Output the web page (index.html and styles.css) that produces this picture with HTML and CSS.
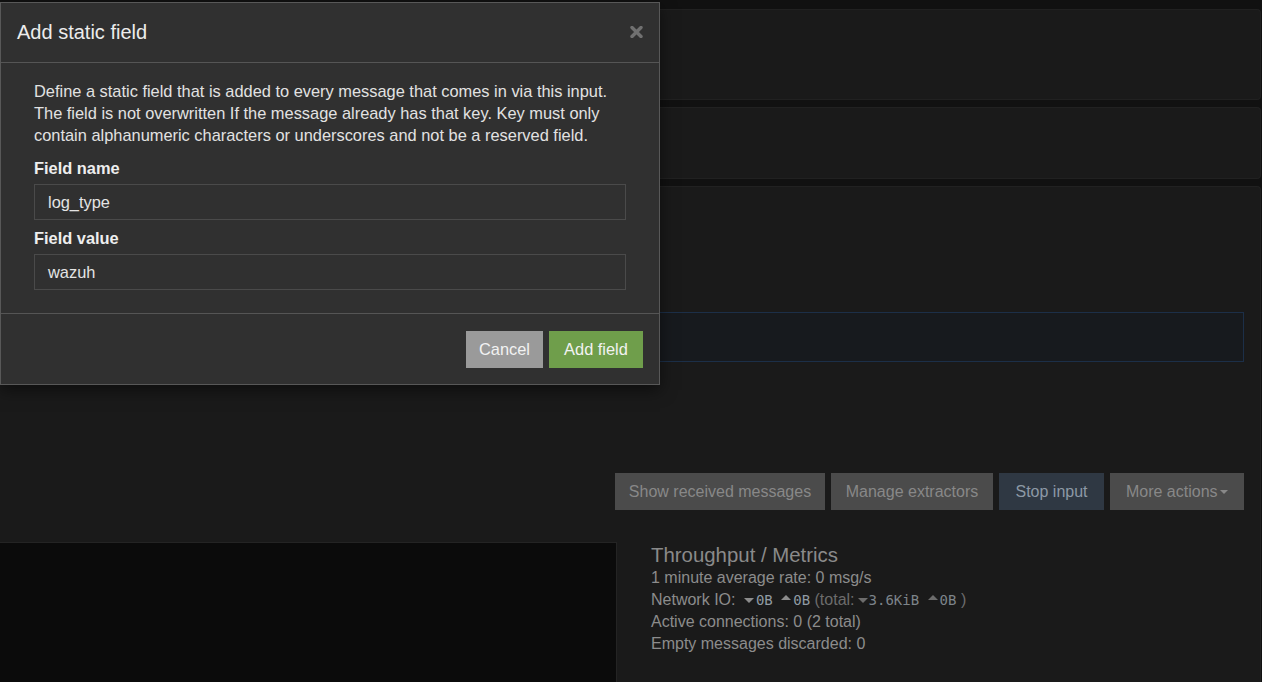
FILE: index.html
```html
<!DOCTYPE html>
<html lang="en">
<head>
<meta charset="utf-8">
<title>Add static field</title>
<link rel="stylesheet" href="styles.css">
</head>
<body>
<div class="page">
  <div class="panel panel-a"></div>
  <div class="panel panel-b"></div>
  <div class="panel panel-c">
    <div class="panel-c-top"></div>
    <div class="alert-box"></div>
    <div class="actions">
      <button class="btn btn-muted btn-show">Show received messages</button>
      <button class="btn btn-muted btn-manage">Manage extractors</button>
      <button class="btn btn-stop">Stop input</button>
      <button class="btn btn-muted btn-more">More actions <span class="caret"></span></button>
    </div>
    <div class="bottom-row">
      <div class="dark-box"></div>
      <div class="metrics">
        <h3 class="metrics-title">Throughput / Metrics</h3>
        <div class="metric">1 minute average rate: 0 msg/s</div>
        <div class="metric">Network IO: <span class="tri down"></span><span class="mono">0B</span> <span class="tri up"></span><span class="mono">0B</span> <span class="total">(total:<span class="tri down tight"></span><span class="mono">3.6KiB</span> <span class="tri up"></span><span class="mono">0B</span> )</span></div>
        <div class="metric">Active connections: 0 (2 total)</div>
        <div class="metric">Empty messages discarded: 0</div>
      </div>
    </div>
  </div>
</div>

<div class="modal">
  <div class="modal-header">
    <h2 class="modal-title">Add static field</h2>
    <svg class="close" width="13" height="12" viewBox="0 0 13 12" aria-label="Close">
      <path d="M2 1.5 L11 10.5 M11 1.5 L2 10.5" stroke="#707070" stroke-width="3.4" stroke-linecap="round" fill="none"/>
    </svg>
  </div>
  <div class="modal-body">
    <p class="help">Define a static field that is added to every message that comes in via this input. The field is not overwritten If the message already has that key. Key must only contain alphanumeric characters or underscores and not be a reserved field.</p>
    <label class="label">Field name</label>
    <div class="input">log_type</div>
    <label class="label label-second">Field value</label>
    <div class="input">wazuh</div>
  </div>
  <div class="modal-footer">
    <button class="mbtn mbtn-cancel">Cancel</button>
    <button class="mbtn mbtn-add">Add field</button>
  </div>
</div>
</body>
</html>
```
FILE: styles.css
```css
* { box-sizing: border-box; }
html, body {
  margin: 0;
  padding: 0;
  height: 100%;
  overflow: hidden;
}
body {
  background: #111111;
  font-family: "Liberation Sans", Arial, sans-serif;
  font-size: 16px;
  color: #8c8c8c;
  position: relative;
}
.page {
  padding: 9px 1px 0 0;
  display: flex;
  flex-direction: column;
  gap: 7px;
}
.panel {
  background: #1a1a1a;
  border: 1px solid #212121;
  border-left: none;
  border-radius: 0 4px 4px 0;
}
.panel-a { height: 91px; }
.panel-b { height: 72px; }
.panel-c {
  height: 520px;
  padding: 0 16px 0 0;
  border-bottom: none;
}
.panel-c-top { height: 125px; }
.alert-box {
  height: 50px;
  background: #171a1e;
  border: 1px solid #1c2f48;
}
.actions {
  margin-top: 111px;
  display: flex;
  justify-content: flex-end;
  gap: 6px;
}
.btn {
  font-family: inherit;
  font-size: 16px;
  height: 37px;
  border: none;
  padding: 0;
  color: #888888;
  background: #4b4b4b;
  text-align: center;
}
.btn-show { width: 210px; }
.btn-manage { width: 162px; }
.btn-stop {
  width: 105px;
  background: #2f3843;
  color: #8d99a6;
}
.btn-more { width: 134px; }
.caret {
  display: inline-block;
  width: 0;
  height: 0;
  border-left: 4px solid transparent;
  border-right: 4px solid transparent;
  border-top: 4px solid #888888;
  vertical-align: middle;
  margin-left: -2px;
}
.bottom-row {
  margin-top: 32px;
  display: grid;
  grid-template-columns: 617px 1fr;
}
.dark-box {
  height: 160px;
  background: #0b0b0b;
  border-top: 1px solid #242424;
  border-right: 1px solid #242424;
}
.metrics {
  padding: 1px 0 0 34px;
}
.metrics-title {
  margin: 0;
  font-weight: normal;
  font-size: 20.4px;
  line-height: 24px;
  color: #8a8a8a;
}
.metric {
  line-height: 22px;
  color: #8c8c8c;
}
.mono {
  font-family: "DejaVu Sans Mono", "Liberation Mono", monospace;
  font-size: 14px;
  color: #909aa3;
}
.total { color: #6c6c6c; }
.total .mono { color: #7d848a; }
.tri {
  display: inline-block;
  width: 0;
  height: 0;
  border-left: 5px solid transparent;
  border-right: 5px solid transparent;
  vertical-align: middle;
  margin-left: 4px;
  margin-right: 2px;
}
.tri.down { border-top: 5px solid #8c8c8c; }
.tri.up { border-bottom: 5px solid #8c8c8c; margin-bottom: 6px; }
.tri.tight { margin-left: 3px; margin-right: 1px; }
.total .tri.down { border-top-color: #6c6c6c; }
.total .tri.up { border-bottom-color: #6c6c6c; }

/* modal */
.modal {
  position: absolute;
  left: 0;
  top: 2px;
  width: 660px;
  background: #303030;
  border: 1px solid #585858;
  box-shadow: 0 5px 15px rgba(0, 0, 0, 0.5);
  color: #e8e8e8;
}
.modal-header {
  height: 60px;
  border-bottom: 1px solid #555555;
  padding: 0 16px;
  display: flex;
  align-items: center;
  justify-content: space-between;
}
.modal-title {
  margin: 0;
  font-size: 20px;
  font-weight: normal;
  color: #ececec;
}
.close {
  display: block;
  margin-top: -2px;
}
.modal-body {
  padding: 17px 33px 23px;
}
.help {
  margin: 0 0 12px;
  font-size: 16.4px;
  line-height: 22px;
  color: #e2e2e2;
}
.label {
  display: block;
  font-weight: bold;
  font-size: 16.4px;
  line-height: 20px;
  margin-bottom: 6px;
  color: #eeeeee;
}
.label-second { margin-top: 8px; }
.input {
  height: 36px;
  border: 1px solid #4a4a4a;
  padding: 0 13px;
  font-size: 16.4px;
  line-height: 34px;
  color: #e4e4e4;
}
.modal-footer {
  border-top: 1px solid #555555;
  padding: 17px 16px 16px;
  display: flex;
  justify-content: flex-end;
  gap: 6px;
}
.mbtn {
  font-family: inherit;
  font-size: 16.4px;
  height: 37px;
  border: none;
  padding: 0;
  color: #f2f2f2;
  text-align: center;
}
.mbtn-cancel { background: #9a9a9a; width: 77px; }
.mbtn-add { background: #6f9e4b; width: 94px; }
```
